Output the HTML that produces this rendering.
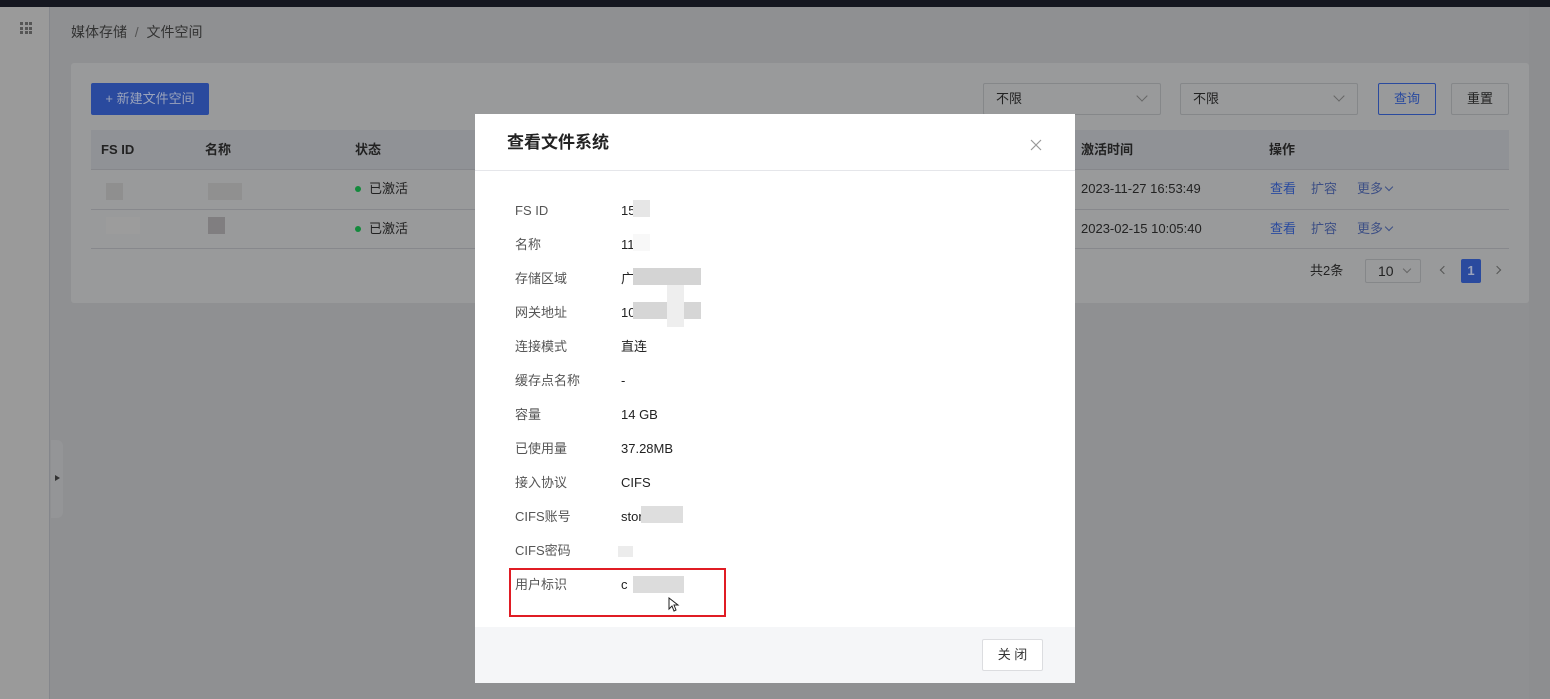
<!DOCTYPE html>
<html><head><meta charset="utf-8"><style>
*{margin:0;padding:0;box-sizing:border-box}
body{width:1550px;height:699px;overflow:hidden;background:#8f9092;font-family:"Liberation Sans","Noto Sans CJK SC",sans-serif;font-size:13px;line-height:16px;color:#222;position:relative}
.a{position:absolute;line-height:16px}
.blk{position:absolute;background:#a5a5a5}
</style></head><body>
<div class="a" style="left:0;top:0;width:1550px;height:7px;background:#151720"></div>
<div class="a" style="left:0;top:7px;width:50px;height:692px;background:#9a9a9a;border-right:1px solid #85878c"></div>
<div class="a" style="left:20px;top:22px;width:12px;height:12px;display:grid;grid-template-columns:repeat(3,3px);gap:1.5px">
<i style="background:#555;display:block"></i><i style="background:#555"></i><i style="background:#555"></i><i style="background:#555"></i><i style="background:#555"></i><i style="background:#555"></i><i style="background:#555"></i><i style="background:#555"></i><i style="background:#555"></i></div>
<div class="a" style="left:51px;top:440px;width:12px;height:78px;background:#949597;border-radius:0 6px 6px 0"></div>
<div class="a" style="left:55px;top:475px;width:0;height:0;border-left:5px solid #333;border-top:3px solid transparent;border-bottom:3px solid transparent"></div>
<div class="a" style="left:71px;top:24px;font-size:14px;color:#333">媒体存储 <span style="color:#555">&nbsp;/&nbsp;</span> 文件空间</div>
<div class="a" style="left:71px;top:63px;width:1458px;height:240px;background:#999a9b;border-radius:3px"></div>
<div class="a" style="left:91px;top:83px;width:118px;height:32px;background:#2a4a9e;border-radius:2px;color:#9aa3bb;font-size:13px;line-height:32px;text-align:center">+ 新建文件空间</div>
<div class="a" style="left:983px;top:83px;width:178px;height:32px;border:1px solid #858789;border-radius:2px;padding-left:12px;line-height:30px;color:#222">不限<span class="a" style="right:14px;top:8px;width:8px;height:8px;border-right:1px solid #666;border-bottom:1px solid #666;transform:rotate(45deg)"></span></div>
<div class="a" style="left:1180px;top:83px;width:178px;height:32px;border:1px solid #858789;border-radius:2px;padding-left:12px;line-height:30px;color:#222">不限<span class="a" style="right:14px;top:8px;width:8px;height:8px;border-right:1px solid #666;border-bottom:1px solid #666;transform:rotate(45deg)"></span></div>
<div class="a" style="left:1378px;top:83px;width:58px;height:32px;border:1px solid #2a4a9e;border-radius:2px;text-align:center;line-height:30px;color:#2a4a9e">查询</div>
<div class="a" style="left:1451px;top:83px;width:58px;height:32px;border:1px solid #858789;border-radius:2px;text-align:center;line-height:30px;color:#222">重置</div>
<div class="a" style="left:91px;top:130px;width:1418px;height:40px;background:#909296;border-bottom:1px solid #86878b"></div>
<div class="a" style="left:91px;top:209px;width:1418px;height:1px;background:#87888c"></div>
<div class="a" style="left:91px;top:248px;width:1418px;height:1px;background:#87888c"></div>
<div class="a" style="left:101px;top:142px;font-weight:bold">FS ID</div>
<div class="a" style="left:205px;top:142px;font-weight:bold">名称</div>
<div class="a" style="left:355px;top:142px;font-weight:bold">状态</div>
<div class="a" style="left:1081px;top:142px;font-weight:bold">激活时间</div>
<div class="a" style="left:1269px;top:142px;font-weight:bold">操作</div>
<div class="blk" style="left:106px;top:183px;width:17px;height:17px;background:#8f8f8f"></div>
<div class="blk" style="left:208px;top:183px;width:34px;height:17px;background:#909090"></div>
<div class="blk" style="left:106px;top:217px;width:34px;height:17px;background:#9c9c9c"></div>
<div class="blk" style="left:208px;top:217px;width:17px;height:17px;background:#807e80"></div>
<div class="a" style="left:355px;top:186px;width:6px;height:6px;border-radius:50%;background:#138a3c"></div>
<div class="a" style="left:369px;top:181px">已激活</div>
<div class="a" style="left:355px;top:226px;width:6px;height:6px;border-radius:50%;background:#138a3c"></div>
<div class="a" style="left:369px;top:221px">已激活</div>
<div class="a" style="left:1081px;top:181px">2023-11-27 16:53:49</div>
<div class="a" style="left:1081px;top:221px">2023-02-15 10:05:40</div>
<div class="a" style="left:1270px;top:181px;color:#2a4a9e">查看</div>
<div class="a" style="left:1311px;top:181px;color:#3d4f85">扩容</div>
<div class="a" style="left:1357px;top:181px;color:#3d4f85">更多</div>
<div class="a" style="left:1386px;top:184px;width:6px;height:6px;border-right:1px solid #3d4f85;border-bottom:1px solid #3d4f85;transform:rotate(45deg)"></div>
<div class="a" style="left:1270px;top:221px;color:#2a4a9e">查看</div>
<div class="a" style="left:1311px;top:221px;color:#3d4f85">扩容</div>
<div class="a" style="left:1357px;top:221px;color:#3d4f85">更多</div>
<div class="a" style="left:1386px;top:224px;width:6px;height:6px;border-right:1px solid #3d4f85;border-bottom:1px solid #3d4f85;transform:rotate(45deg)"></div>
<div class="a" style="left:1310px;top:263px">共2条</div>
<div class="a" style="left:1365px;top:259px;width:56px;height:24px;border:1px solid #858789;border-radius:2px;padding-left:12px;line-height:22px;font-size:14px">10<span class="a" style="right:10px;top:6px;width:6px;height:6px;border-right:1px solid #666;border-bottom:1px solid #666;transform:rotate(45deg)"></span></div>
<div class="a" style="left:1441px;top:267px;width:6px;height:6px;border-left:1px solid #555;border-bottom:1px solid #555;transform:rotate(45deg)"></div>
<div class="a" style="left:1461px;top:259px;width:20px;height:24px;background:#2a4a9e;border-radius:2px;color:#9aa3bb;text-align:center;line-height:24px;font-weight:bold">1</div>
<div class="a" style="left:1494px;top:267px;width:6px;height:6px;border-right:1px solid #555;border-top:1px solid #555;transform:rotate(45deg)"></div>
<div class="a" style="left:1529px;top:7px;width:21px;height:692px;background:#8d8e90"></div>

<div class="a" style="left:475px;top:114px;width:600px;height:569px;background:#fff">
<div class="a" style="left:32px;top:19px;font-size:17px;line-height:20px;font-weight:bold;color:#222">查看文件系统</div>
<div class="a" style="left:555px;top:25px;width:12px;height:12px">
<svg width="12" height="12"><path d="M1 1L11 11M11 1L1 11" stroke="#999" stroke-width="1.2"/></svg></div>
<div class="a" style="left:0;top:56px;width:600px;height:1px;background:#e5e6ea"></div>
<div class="a" style="left:0;top:513px;width:600px;height:56px;background:#f5f6f8"></div>
<div class="a" style="left:507px;top:525px;width:61px;height:32px;border:1px solid #dcdde0;background:#fff;border-radius:2px;text-align:center;line-height:30px;color:#333">关 闭</div>
<div class="a" style="left:34px;top:454px;width:217px;height:49px;border:2px solid #e01c24"></div>
</div>
<div class="a" style="left:515px;top:204px;color:#555;line-height:14px">
<div style="height:34px">FS ID</div><div style="height:34px">名称</div><div style="height:34px">存储区域</div><div style="height:34px">网关地址</div><div style="height:34px">连接模式</div><div style="height:34px">缓存点名称</div><div style="height:34px">容量</div><div style="height:34px">已使用量</div><div style="height:34px">接入协议</div><div style="height:34px">CIFS账号</div><div style="height:34px">CIFS密码</div><div style="height:34px">用户标识</div></div>
<div class="a" style="left:621px;top:204px;color:#222;line-height:14px">
<div style="height:34px">15</div><div style="height:34px">11</div><div style="height:34px">广</div><div style="height:34px">10</div><div style="height:34px">直连</div><div style="height:34px">-</div><div style="height:34px">14 GB</div><div style="height:34px">37.28MB</div><div style="height:34px">CIFS</div><div style="height:34px">stor</div><div style="height:34px"></div><div style="height:34px">c</div></div>
<div class="blk" style="left:633px;top:200px;width:17px;height:17px;background:#e6e6e6"></div>
<div class="blk" style="left:633px;top:234px;width:17px;height:17px;background:#f8f8f8"></div>
<div class="blk" style="left:633px;top:268px;width:68px;height:17px;background:#d4d4d4"></div>
<div class="blk" style="left:633px;top:302px;width:68px;height:17px;background:#d6d6d6"></div>
<div class="blk" style="left:667px;top:285px;width:17px;height:42px;background:#eeeeee"></div>
<div class="blk" style="left:641px;top:506px;width:42px;height:17px;background:#dedede"></div>
<div class="blk" style="left:618px;top:546px;width:15px;height:11px;background:#ececec"></div>
<div class="blk" style="left:633px;top:576px;width:51px;height:17px;background:#dcdcdc"></div>
<svg class="a" style="left:668px;top:597px" width="14" height="16"><path d="M1 1V12L4 9L6 14L8 13L6 8H10Z" fill="#fff" stroke="#222" stroke-width="1"/></svg>
</body></html>
